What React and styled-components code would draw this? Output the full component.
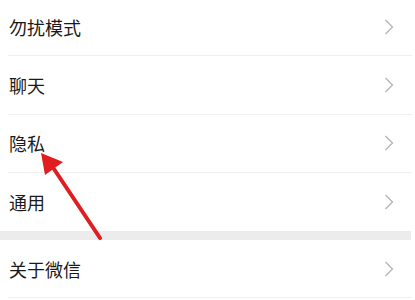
import styled, { createGlobalStyle } from "styled-components";

const GlobalStyle = createGlobalStyle`
  html, body {
    margin: 0;
    padding: 0;
    background: #fff;
  }
  body {
    font-family: "Noto Sans CJK SC", "Noto Sans", sans-serif;
  }
`;

const Page = styled.div`
  position: relative;
  width: 415px;
  height: 300px;
  overflow: hidden;
  background: #fff;
`;

const Group = styled.div`
  margin-top: ${(props) => (props.$first ? "-2px" : "0")};
  background: #fff;
`;

const Row = styled.div`
  height: 58.25px;
  padding-left: 8px;
  padding-right: 3px;
  box-sizing: border-box;
`;

const RowInner = styled.div`
  height: 100%;
  display: flex;
  align-items: center;
  justify-content: space-between;
  box-sizing: border-box;
  border-bottom: ${(props) => (props.$line ? "1px solid #efefef" : "none")};
  padding-left: 1px;
  padding-right: 18px;
`;

const Label = styled.span`
  font-size: 18px;
  color: #1a1a1a;
`;

const Band = styled.div`
  height: 9px;
  margin-right: 4px;
  background: #ececec;
`;

const Overlay = styled.svg`
  position: absolute;
  left: 0;
  top: 0;
  pointer-events: none;
`;

function Chevron() {
  return (
    <svg width="10" height="16" viewBox="0 0 10 16">
      <polyline
        points="1.5,1 8.5,8 1.5,15"
        fill="none"
        stroke="#b4b4b4"
        strokeWidth="1.3"
      />
    </svg>
  );
}

function Item({ label, line = true }) {
  return (
    <Row>
      <RowInner $line={line}>
        <Label>{label}</Label>
        <Chevron />
      </RowInner>
    </Row>
  );
}

export default function App() {
  return (
    <Page>
      <GlobalStyle />
      <Group $first>
        <Item label="勿扰模式" />
        <Item label="聊天" />
        <Item label="隐私" />
        <Item label="通用" line={false} />
      </Group>
      <Band />
      <Group>
        <Item label="关于微信" />
      </Group>
      <Overlay width="415" height="300" viewBox="0 0 415 300">
        <line
          x1="100"
          y1="238"
          x2="52"
          y2="166"
          stroke="#e21d1f"
          strokeWidth="4"
          strokeLinecap="round"
        />
        <polygon points="41,153 63,162 45,175" fill="#e21d1f" />
      </Overlay>
    </Page>
  );
}
